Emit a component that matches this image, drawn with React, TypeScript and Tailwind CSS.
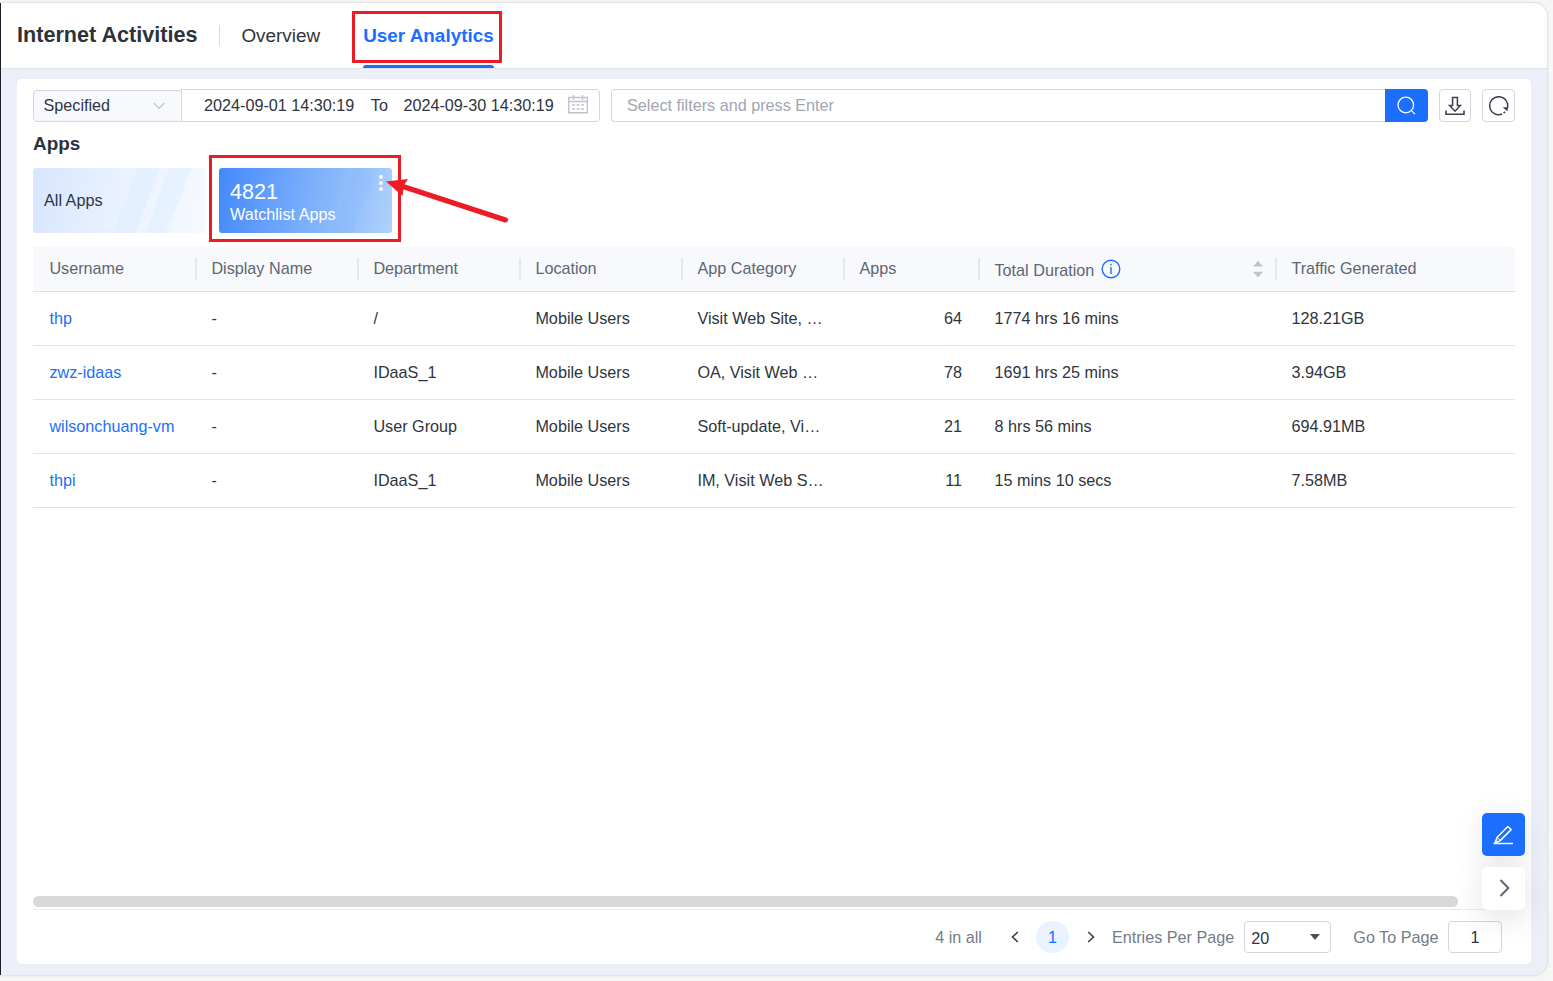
type Row = {
  username: string;
  department: string;
  category: string;
  apps: number;
  duration: string;
  traffic: string;
};

const rows: Row[] = [
  { username: "thp", department: "/", category: "Visit Web Site, …", apps: 64, duration: "1774 hrs 16 mins", traffic: "128.21GB" },
  { username: "zwz-idaas", department: "IDaaS_1", category: "OA, Visit Web …", apps: 78, duration: "1691 hrs 25 mins", traffic: "3.94GB" },
  { username: "wilsonchuang-vm", department: "User Group", category: "Soft-update, Vi…", apps: 21, duration: "8 hrs 56 mins", traffic: "694.91MB" },
  { username: "thpi", department: "IDaaS_1", category: "IM, Visit Web S…", apps: 11, duration: "15 mins 10 secs", traffic: "7.58MB" },
];

const grid = "grid grid-cols-[162px_162px_162px_162px_162px_135px_297px_1fr]";

function Header() {
  return (
    <header className="flex h-[66px] shrink-0 items-stretch border-b border-[#dfe2ea] bg-white pl-4">
      <h1 className="pt-4 text-[21.6px] leading-8 font-bold text-[#2b323d]">Internet Activities</h1>
      <div className="mt-[22px] ml-[22px] h-[21px] w-px bg-[#d8dbe1]" />
      <nav className="flex text-[18.9px] leading-8">
        <a className="ml-[21px] pt-[17px] text-[#2f3540]">Overview</a>
        <a className="relative ml-[43px] pt-[17px] font-bold text-[#1c6eff]">
          User Analytics
          <span className="absolute inset-x-0 bottom-0 h-[3px] rounded-t-sm bg-[#1c6eff]" />
          <span className="absolute top-2 -right-2 -left-[11px] h-[52px] border-[3px] border-[#ed1c24]" />
        </a>
      </nav>
    </header>
  );
}

function Toolbar() {
  return (
    <div className="flex h-[33px] items-stretch">
      <div className="mt-px flex w-[149px] items-center justify-between rounded-l-sm border border-[#d3d6de] bg-[#f7f9fd] pr-4 pl-[9.5px]">
        <span className="-mt-[3px]">Specified</span>
        <svg width="12" height="8" viewBox="0 0 12 8" fill="none" stroke="#bfc3cb" strokeWidth="1.2">
          <path d="M.8 1l5.2 5.4L11.2 1" />
        </svg>
      </div>
      <div className="-ml-px flex w-[419px] items-center rounded-r-sm border border-[#d3d6de] pl-[22px]">
        <span className="-mt-px">2024-09-01 14:30:19</span>
        <span className="-mt-px ml-[16.5px]">To</span>
        <span className="-mt-px ml-[15.5px]">2024-09-30 14:30:19</span>
        <svg width="20" height="19" viewBox="0 0 20 19" className="-mt-[3px] ml-[14px]" fill="none" stroke="#c0c4cc">
          <path d="M.7 2.5h18.6v15.3H.7zM.7 6.5h18.6M5.5 0v5M14.5 0v5" strokeWidth="1.4" />
          <path d="M4 10h3M8.5 10h3M13 10h3M4 14h3M8.5 14h3M13 14h3" strokeWidth="1.4" />
        </svg>
      </div>
      <div className="ml-[11px] flex w-[774px] items-center rounded-l-sm border border-r-0 border-[#d3d6de] pl-[15px] text-[#a1a6b1]">
        <span className="-mt-px">Select filters and press Enter</span>
      </div>
      <button className="flex w-[43px] items-center justify-center rounded-r-sm bg-[#1c6eff]">
        <svg width="20" height="20" viewBox="0 0 20 20" className="mt-px" fill="none" stroke="#fff" strokeWidth="1.3">
          <circle cx="8.8" cy="9" r="7.8" />
          <path d="M14.4 14.600l3.600 3.500" />
        </svg>
      </button>
      <button className="ml-[11px] flex w-8 items-center justify-center rounded-sm border border-[#d3d6de]">
        <svg width="20" height="20" viewBox="0 0 20 20" className="mt-px" fill="none" stroke="#3a404c" strokeWidth="1.500">
          <path d="M7.600 1.500h4.800v8h3L10 15.200 4.600 9.500h3z" />
          <path d="M1 14.500v3.800h18v-3.800" strokeWidth="1.600" />
        </svg>
      </button>
      <button className="ml-[11px] flex w-[33px] items-center justify-center rounded-sm border border-[#d3d6de]">
        <svg width="21" height="20" viewBox="0 0 21 20" fill="none" stroke="#3a404c" strokeWidth="1.500">
          <path d="M17 15.800a9 9 0 0 1-1.400 1.500M14.200 18A9 9 0 1 1 19.400 12" />
          <path d="M14.700 11.200h5.500l-.9 4z" fill="#3a404c" stroke="none" />
        </svg>
      </button>
    </div>
  );
}

function Stripes({ color }: { color: string }) {
  return (
    <svg width="173" height="65" viewBox="0 0 173 65" className="absolute inset-0" fill={color}>
      <path d="M105 0h22l-25 65H80zM136 0h23l-26 65h-20z" />
    </svg>
  );
}

function AppCards() {
  return (
    <div className="flex gap-[13px]">
      <div className="relative flex h-[65px] w-[173px] items-center overflow-hidden rounded-[3px] bg-linear-[100deg] from-[#d7e5ff] via-[#e9f2ff] to-[#f6faff] pl-[11px]">
        <Stripes color="rgb(218 236 254 / .4)" />
        <span className="relative -mt-0.5">All Apps</span>
      </div>
      <div className="relative h-[65px] w-[173px]">
        <div className="relative h-full overflow-hidden rounded-[3px] bg-linear-[100deg] from-[#4389fc] via-[#79aefb] to-[#afd1fd] pt-[11px] pl-[11px] text-white">
          <Stripes color="rgb(125 178 250 / .16)" />
          <div className="relative mt-px text-[21.6px] leading-6">4821</div>
          <div className="relative -mt-px leading-[23px]">Watchlist Apps</div>
          <svg width="4" height="16" viewBox="0 0 4 16" className="absolute top-[7px] right-[9px]" fill="#fff">
            <circle cx="2" cy="2" r="1.900" />
            <circle cx="2" cy="8" r="1.900" />
            <circle cx="2" cy="14" r="1.900" />
          </svg>
        </div>
        <div className="absolute -top-[13px] -left-[10px] h-[87px] w-48 border-[3px] border-[#ed1c24]" />
        <svg width="124" height="48" viewBox="0 0 124 48" className="absolute top-2 left-[167px]">
          <path d="M14 9.500L119.500 44" stroke="#ed1c24" strokeWidth="5" strokeLinecap="round" />
          <path d="M0 5.500L22 3l-4 6-1.500 11z" fill="#ed1c24" />
        </svg>
      </div>
    </div>
  );
}

function HeadCell({ label }: { label: string }) {
  return (
    <div className="relative flex items-center pl-[16.4px]">
      <span className="-mt-[3px]">{label}</span>
      <span className="absolute top-[11px] right-[-2px] h-[22px] w-[2px] bg-[#e6e8ee]" />
    </div>
  );
}

function Table() {
  return (
    <div>
      <div className={`${grid} h-[45px] border-b border-[#dfe2e8] bg-[#f7f9fd] text-[#5f6673]`}>
        <HeadCell label="Username" />
        <HeadCell label="Display Name" />
        <HeadCell label="Department" />
        <HeadCell label="Location" />
        <HeadCell label="App Category" />
        <HeadCell label="Apps" />
        <div className="relative flex items-center pr-3 pl-[16.500px]">
          <span className="mt-px">Total Duration</span>
          <svg width="20" height="20" viewBox="0 0 20 20" className="ml-[6.500px]" fill="none" stroke="#1c6eff" strokeWidth="1.4">
            <circle cx="10" cy="10" r="8.800" />
            <path d="M10 8v7M10 4.800v1.600" />
          </svg>
          <svg width="10" height="18" viewBox="0 0 10 18" className="ml-auto" fill="#bfc3cc">
            <path d="M0 6.500L5 .7l5 5.800zM0 11.700h10l-5 5.800z" />
          </svg>
          <span className="absolute top-[11px] right-[-2px] h-[22px] w-[2px] bg-[#e6e8ee]" />
        </div>
        <div className="flex items-center pl-[16.400px]">
          <span className="-mt-[3px]">Traffic Generated</span>
        </div>
      </div>
      {rows.map((row) => (
        <div key={row.username} className={`${grid} h-[54px] items-center border-b border-[#e2e4e9] pb-0.5`}>
          <span className="pl-[16.4px] text-[#1c6eff]">{row.username}</span>
          <span className="pl-[16.4px]">-</span>
          <span className="pl-[16.4px]">{row.department}</span>
          <span className="pl-[16.4px]">Mobile Users</span>
          <span className="pl-[16.4px]">{row.category}</span>
          <span className="pr-4 text-right">{row.apps}</span>
          <span className="pl-[16.5px]">{row.duration}</span>
          <span className="pl-[16.4px]">{row.traffic}</span>
        </div>
      ))}
    </div>
  );
}

function Pagination() {
  return (
    <div className="flex h-[54px] items-center justify-end pr-[13px] text-[#757b87]">
      <span>4 in all</span>
      <svg width="8" height="12" viewBox="0 0 8 12" className="ml-[29px]" fill="none" stroke="#3a404c" strokeWidth="1.6">
        <path d="M6.800 1L1.500 6l5.300 5" />
      </svg>
      <span className="ml-[17px] flex h-8 w-[33px] items-center justify-center rounded-full bg-[#e8f3ff] text-[#1c6eff]">1</span>
      <svg width="8" height="12" viewBox="0 0 8 12" className="ml-[18px]" fill="none" stroke="#3a404c" strokeWidth="1.6">
        <path d="M1.200 1l5.300 5-5.300 5" />
      </svg>
      <span className="ml-[17px]">Entries Per Page</span>
      <div className="ml-[9.500px] flex h-8 w-[87px] items-center justify-between rounded-sm border border-[#d3d6de] pr-[10px] pl-[6.500px] text-[#2f3540]">
        <span className="mt-px">20</span>
        <svg width="10" height="6" viewBox="0 0 10 6" className="-mt-px" fill="#4a505c">
          <path d="M0 0h10L5 6z" />
        </svg>
      </div>
      <span className="ml-[22.500px]">Go To Page</span>
      <div className="ml-[9.500px] flex h-8 w-[54px] items-center justify-center rounded-sm border border-[#d3d6de] text-[#2f3540]">1</div>
    </div>
  );
}

function FloatingActions() {
  return (
    <div className="absolute top-[734px] right-[6px] flex flex-col gap-[11px]">
      <button className="flex size-[43px] items-center justify-center rounded-[5px] bg-[#1c6eff] shadow-[0_8px_32px_rgba(0,0,0,0.1)]">
        <svg width="21" height="20" viewBox="0 0 21 20" className="mt-px" fill="none" stroke="#fff" strokeWidth="1.500" strokeLinejoin="round">
          <path d="M2 18l2.200-5.800L14.800 1.500l3.400 3.100L7.200 15.600z" />
          <path d="M4.200 12.200l3 3.400" strokeWidth="1" />
          <path d="M.5 18.500h19.500" />
        </svg>
      </button>
      <button className="flex size-[43px] items-center justify-center rounded-[5px] bg-white shadow-[0_8px_32px_rgba(0,0,0,0.12)]">
        <svg width="11" height="18" viewBox="0 0 11 18" className="-mt-px ml-px" fill="none" stroke="#5f6673" strokeWidth="2">
          <path d="M1.500 1l7.800 8-7.800 8" />
        </svg>
      </button>
    </div>
  );
}

export default function App() {
  return (
    <div className="h-[981px] w-[1553px] overflow-hidden bg-[#f6f6f6] pt-[3px] font-['Liberation_Sans',Arial,sans-serif] text-[16.2px] leading-6 text-[#2f3540]">
      <div className="flex h-[972px] w-[1547px] flex-col overflow-hidden rounded-r-[14px] border-l border-[#1b1d2a] bg-[#eceff8] shadow-[0_0_2px_1px_rgba(0,0,0,0.1)]">
        <Header />
        <main className="relative mx-4 mt-[10px] flex h-[885px] flex-col rounded-[5px] bg-white px-4 pt-[10px]">
          <Toolbar />
          <h2 className="mb-1 h-[42px] pt-px text-[18.9px] leading-[42px] font-bold text-[#2b323d]">Apps</h2>
          <AppCards />
          <div className="mt-[14px] flex-1">
            <Table />
          </div>
          <div className="h-[11px] w-[1425px] rounded-full bg-[#d8d9db]" />
          <div className="mt-[2px] h-px bg-[#e9eaec]" />
          <Pagination />
          <FloatingActions />
        </main>
      </div>
    </div>
  );
}
